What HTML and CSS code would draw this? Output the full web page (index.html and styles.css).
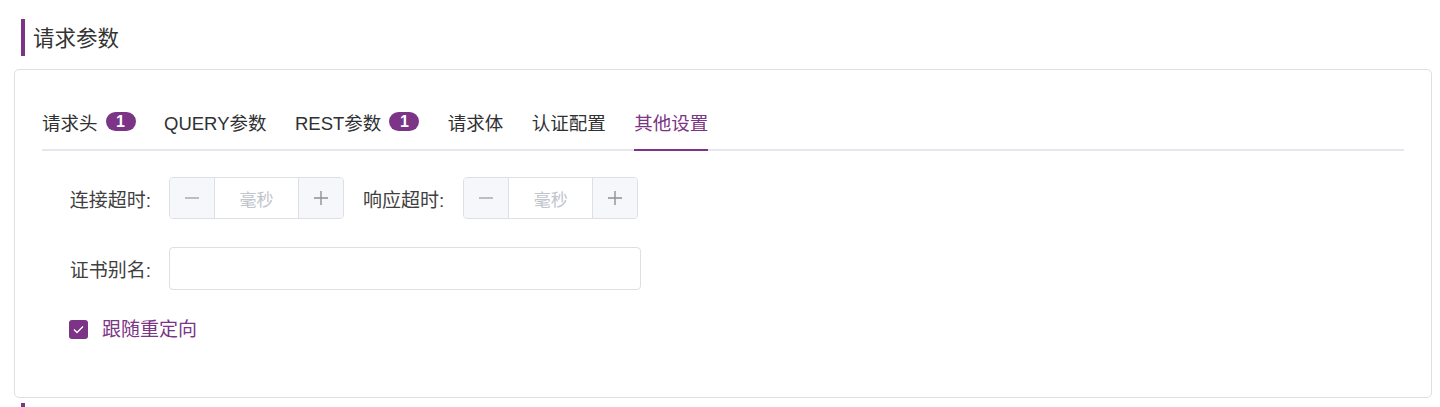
FILE: index.html
```html
<!DOCTYPE html>
<html lang="zh-CN">
<head>
<meta charset="utf-8">
<title>请求参数</title>
<link rel="stylesheet" href="styles.css">
</head>
<body>
<div class="page">
  <section class="section">
    <div class="section-title"><span class="bar"></span><span class="title-text">请求参数</span></div>
    <div class="card">
      <div class="tabs">
        <div class="tab">请求头<span class="badge">1</span></div>
        <div class="tab">QUERY参数</div>
        <div class="tab">REST参数<span class="badge">1</span></div>
        <div class="tab">请求体</div>
        <div class="tab">认证配置</div>
        <div class="tab active">其他设置</div>
      </div>
      <div class="form">
        <div class="row row-1">
          <label class="label">连接超时:</label>
          <div class="num-input">
            <span class="num-btn"><svg width="14" height="14" viewBox="0 0 14 14"><path d="M0 7h14" stroke="#a8abb2" stroke-width="1.6"/></svg></span>
            <span class="num-field">毫秒</span>
            <span class="num-btn plus"><svg width="14" height="14" viewBox="0 0 14 14"><path d="M0 7h14M7 0v14" stroke="#8d9095" stroke-width="1.4"/></svg></span>
          </div>
          <label class="label inline">响应超时:</label>
          <div class="num-input">
            <span class="num-btn"><svg width="14" height="14" viewBox="0 0 14 14"><path d="M0 7h14" stroke="#a8abb2" stroke-width="1.6"/></svg></span>
            <span class="num-field">毫秒</span>
            <span class="num-btn plus"><svg width="14" height="14" viewBox="0 0 14 14"><path d="M0 7h14M7 0v14" stroke="#8d9095" stroke-width="1.4"/></svg></span>
          </div>
        </div>
        <div class="row row-2">
          <label class="label">证书别名:</label>
          <div class="text-input"></div>
        </div>
        <div class="row row-check">
          <span class="checkbox"><svg width="11" height="9" viewBox="0 0 11 9"><path d="M1 4.5l3 3L10 1.5" fill="none" stroke="#fff" stroke-width="1.3"/></svg></span>
          <span class="check-label">跟随重定向</span>
        </div>
      </div>
    </div>
  </section>
  <section class="section">
    <div class="section-title"><span class="bar"></span></div>
  </section>
</div>
</body>
</html>
```

FILE: styles.css
```css
* { box-sizing: border-box; }
html, body { margin: 0; padding: 0; background: #fff; }
body {
  font-family: "Liberation Sans", "Noto Sans CJK SC", sans-serif;
  color: #303133;
}
.page {
  padding: 19px 8px 0 14px;
}
.section { margin-bottom: 5px; }
.section-title {
  display: flex;
  align-items: center;
  height: 37px;
  margin-left: 7px;
  margin-bottom: 13px;
}
.bar {
  width: 4px;
  height: 37px;
  background: #7b3486;
}
.title-text {
  margin-left: 8px;
  margin-bottom: 3px;
  font-size: 21.5px;
  color: #333;
}
.card {
  border: 1px solid #dcdfe6;
  border-radius: 5px;
  padding: 28px 27px 53px;
  background: #fff;
}
.tabs {
  display: flex;
  gap: 28.5px;
  border-bottom: 2px solid #e4e7ed;
  height: 53px;
}
.tab {
  position: relative;
  display: flex;
  align-items: center;
  height: 51px;
  padding-bottom: 4px;
  font-size: 18.5px;
  color: #303133;
}
.tab.active { color: #7b3486; }
.tab.active::after {
  content: "";
  position: absolute;
  left: 0;
  right: 0;
  bottom: -2px;
  height: 2px;
  background: #7b3486;
}
.badge {
  display: inline-flex;
  align-items: center;
  justify-content: center;
  margin-left: 8px;
  width: 30px;
  height: 19px;
  border-radius: 10px;
  background: #7b3486;
  color: #fff;
  font-size: 16px;
  font-weight: bold;
}
.form { padding-top: 26px; }
.row {
  display: flex;
  align-items: center;
}
.row-1 { height: 42px; margin-bottom: 28px; }
.row-2 { height: 43px; margin-bottom: 24px; }
.row-check { height: 30px; padding-left: 27px; padding-bottom: 3px; }
.label {
  width: 127px;
  padding-right: 18px;
  text-align: right;
  font-size: 19px;
  color: #404040;
}
.label.inline {
  width: auto;
  margin-left: 19px;
  padding-right: 19px;
}
.num-input {
  display: flex;
  width: 175px;
  height: 42px;
  border: 1px solid #dcdfe6;
  border-radius: 4px;
  overflow: hidden;
}
.num-btn {
  width: 45px;
  display: flex;
  align-items: center;
  justify-content: center;
  background: #f5f7fa;
  border-right: 1px solid #dcdfe6;
}
.num-btn.plus {
  border-right: 0;
  border-left: 1px solid #dcdfe6;
}
.num-field {
  flex: 1;
  display: flex;
  align-items: center;
  justify-content: center;
  font-size: 17px;
  color: #c0c4cc;
}
.text-input {
  width: 472px;
  height: 43px;
  border: 1px solid #dcdfe6;
  border-radius: 4px;
}
.checkbox {
  width: 19px;
  height: 19px;
  border-radius: 3px;
  background: #7b3486;
  display: flex;
  align-items: center;
  justify-content: center;
  margin-top: 3px;
}
.check-label {
  margin-left: 14px;
  font-size: 19px;
  color: #7b3486;
}
```
